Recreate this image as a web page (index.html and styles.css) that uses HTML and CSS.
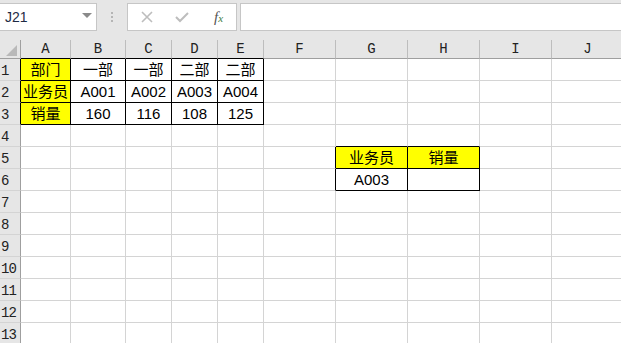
FILE: index.html
```html
<!DOCTYPE html>
<html lang="zh-CN">
<head>
    <meta charset="UTF-8">
    <title>Sheet1</title>
    <link rel="stylesheet" href="styles.css">
</head>
<body>
    <!-- Строка формул -->
    <div class="toolbar">
        <div class="namebox">
            <span>J21</span>
            <span class="drop"></span>
        </div>
        <div class="dots"><i></i><i></i><i></i></div>
        <div class="fxbox">
            <svg class="ico" width="14" height="14" viewBox="0 0 14 14"><path d="M2 2 L12 12 M12 2 L2 12" stroke="#bdbdbd" stroke-width="1.6" fill="none"/></svg>
            <svg class="ico" width="16" height="14" viewBox="0 0 16 14"><path d="M2 7 L6 11 L14 3" stroke="#bdbdbd" stroke-width="2" fill="none"/></svg>
            <span class="fx"><span class="f">f</span><span class="x">x</span></span>
        </div>
        <div class="formula"></div>
    </div>

    <!-- Лист -->
    <div class="sheet">
        <div class="r hd">
            <div class="ch corner"><span class="tri"></span></div>
            <div class="ch kb">A</div><div class="ch kb">B</div><div class="ch kb">C</div><div class="ch kb">D</div><div class="ch kb">E</div>
            <div class="ch">F</div><div class="ch">G</div><div class="ch">H</div><div class="ch">I</div><div class="ch">J</div>
        </div>
        <div class="r">
            <div class="rh kr">1</div>
            <div class="c k y">部门</div><div class="c k">一部</div><div class="c k">一部</div><div class="c k">二部</div><div class="c k">二部</div>
            <div class="c"></div><div class="c"></div><div class="c"></div><div class="c"></div><div class="c"></div>
        </div>
        <div class="r">
            <div class="rh kr">2</div>
            <div class="c k y">业务员</div><div class="c k">A001</div><div class="c k">A002</div><div class="c k">A003</div><div class="c k">A004</div>
            <div class="c"></div><div class="c"></div><div class="c"></div><div class="c"></div><div class="c"></div>
        </div>
        <div class="r">
            <div class="rh kr">3</div>
            <div class="c k y">销量</div><div class="c k">160</div><div class="c k">116</div><div class="c k">108</div><div class="c k">125</div>
            <div class="c"></div><div class="c"></div><div class="c"></div><div class="c"></div><div class="c"></div>
        </div>
        <div class="r">
            <div class="rh">4</div>
            <div class="c"></div><div class="c"></div><div class="c"></div><div class="c"></div><div class="c"></div>
            <div class="c"></div><div class="c kb"></div><div class="c kb"></div><div class="c"></div><div class="c"></div>
        </div>
        <div class="r">
            <div class="rh">5</div>
            <div class="c"></div><div class="c"></div><div class="c"></div><div class="c"></div><div class="c"></div>
            <div class="c kr"></div><div class="c k y">业务员</div><div class="c k y">销量</div><div class="c"></div><div class="c"></div>
        </div>
        <div class="r">
            <div class="rh">6</div>
            <div class="c"></div><div class="c"></div><div class="c"></div><div class="c"></div><div class="c"></div>
            <div class="c kr"></div><div class="c k">A003</div><div class="c k"></div><div class="c"></div><div class="c"></div>
        </div>
        <div class="r">
            <div class="rh">7</div>
            <div class="c"></div><div class="c"></div><div class="c"></div><div class="c"></div><div class="c"></div>
            <div class="c"></div><div class="c"></div><div class="c"></div><div class="c"></div><div class="c"></div>
        </div>
        <div class="r">
            <div class="rh">8</div>
            <div class="c"></div><div class="c"></div><div class="c"></div><div class="c"></div><div class="c"></div>
            <div class="c"></div><div class="c"></div><div class="c"></div><div class="c"></div><div class="c"></div>
        </div>
        <div class="r">
            <div class="rh">9</div>
            <div class="c"></div><div class="c"></div><div class="c"></div><div class="c"></div><div class="c"></div>
            <div class="c"></div><div class="c"></div><div class="c"></div><div class="c"></div><div class="c"></div>
        </div>
        <div class="r">
            <div class="rh">10</div>
            <div class="c"></div><div class="c"></div><div class="c"></div><div class="c"></div><div class="c"></div>
            <div class="c"></div><div class="c"></div><div class="c"></div><div class="c"></div><div class="c"></div>
        </div>
        <div class="r">
            <div class="rh">11</div>
            <div class="c"></div><div class="c"></div><div class="c"></div><div class="c"></div><div class="c"></div>
            <div class="c"></div><div class="c"></div><div class="c"></div><div class="c"></div><div class="c"></div>
        </div>
        <div class="r">
            <div class="rh">12</div>
            <div class="c"></div><div class="c"></div><div class="c"></div><div class="c"></div><div class="c"></div>
            <div class="c"></div><div class="c"></div><div class="c"></div><div class="c"></div><div class="c"></div>
        </div>
        <div class="r">
            <div class="rh">13</div>
            <div class="c"></div><div class="c"></div><div class="c"></div><div class="c"></div><div class="c"></div>
            <div class="c"></div><div class="c"></div><div class="c"></div><div class="c"></div><div class="c"></div>
        </div>
    </div>
</body>
</html>
```

FILE: styles.css
```css
* {
    box-sizing: border-box;
    margin: 0;
    padding: 0;
}

body {
    width: 621px;
    height: 343px;
    overflow: hidden;
    background: #fff;
    font-family: "Liberation Sans", "Noto Sans CJK SC", sans-serif;
    color: #000;
}

/* Строка формул */
.toolbar {
    display: flex;
    align-items: flex-start;
    height: 40px;
    padding-top: 3px;
    background: #e6e6e6;
}

.namebox {
    width: 98px;
    height: 28px;
    margin-left: -1px;
    border: 1px solid #c6c6c6;
    background: #fff;
    display: flex;
    align-items: center;
    justify-content: space-between;
    padding: 0 4px 0 5px;
    font-size: 14px;
    color: #1e2a44;
}

.drop {
    width: 0;
    height: 0;
    border-left: 5px solid transparent;
    border-right: 5px solid transparent;
    border-top: 5px solid #8a8a8a;
    margin-top: -3px;
}

.dots {
    width: 30px;
    height: 28px;
    display: flex;
    flex-direction: column;
    align-items: center;
    justify-content: center;
    gap: 2px;
}

.dots i {
    display: block;
    width: 2px;
    height: 2px;
    background: #b5b5b5;
}

.fxbox {
    width: 110px;
    height: 28px;
    border: 1px solid #c6c6c6;
    background: #fff;
    display: flex;
    align-items: center;
    padding-left: 12px;
    gap: 20px;
}

.fx {
    font-family: "Liberation Serif", serif;
    font-style: italic;
    font-size: 15px;
    color: #555;
    margin-left: 4px;
}

.fx .x {
    font-size: 11px;
    color: #3f7d3f;
}

.formula {
    flex: 1;
    height: 28px;
    margin-left: 3px;
    margin-right: -2px;
    border: 1px solid #c6c6c6;
    background: #fff;
}

/* Сетка листа */
.r {
    display: grid;
    grid-template-columns: 21px 50px 55px 46px 46px 46px 72px 72px 72px 72px 72px;
    height: 22px;
}

.r.hd {
    height: 19px;
}

.ch {
    background: #e6e6e6;
    border-right: 1px solid #bdbdbd;
    border-bottom: 1px solid #9f9f9f;
    font-family: "Liberation Mono", "Courier New", monospace;
    font-size: 14px;
    color: #222;
    text-align: center;
    line-height: 18px;
}

.corner {
    position: relative;
    border-right-color: #9f9f9f;
}

.tri {
    position: absolute;
    right: 3px;
    bottom: 2px;
    width: 0;
    height: 0;
    border-left: 11px solid transparent;
    border-bottom: 11px solid #b9b9b9;
}

.rh {
    background: #e6e6e6;
    border-right: 1px solid #9f9f9f;
    border-bottom: 1px solid #d4d4d4;
    font-family: "Liberation Mono", "Courier New", monospace;
    font-size: 14px;
    color: #222;
    padding-left: 1px;
    line-height: 24px;
    overflow: hidden;
    white-space: nowrap;
    letter-spacing: -1px;
}

.c {
    border-right: 1px solid #d4d4d4;
    border-bottom: 1px solid #d4d4d4;
    font-size: 15px;
    line-height: 21px;
    text-align: center;
    white-space: nowrap;
}

.y {
    background: #ffff00;
}

.k {
    border-color: #000;
}

.kr {
    border-right-color: #000;
}

.kb {
    border-bottom-color: #000;
}
```
